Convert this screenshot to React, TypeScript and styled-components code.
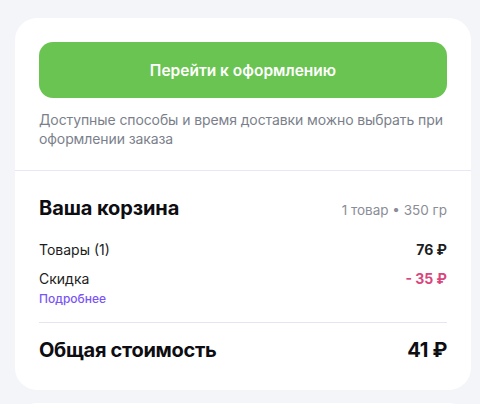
import styled, { createGlobalStyle } from 'styled-components';

const GlobalStyle = createGlobalStyle`
  html, body {
    margin: 0;
    padding: 0;
    background: #f4f5f9;
    font-family: Inter, 'Noto Sans', sans-serif;
    -webkit-font-smoothing: antialiased;
  }
`;

// styled components
const Page = styled.div`
  display: flex;
  flex-direction: column;
  gap: 13px;
  padding: 18px 9px 0 15px;
  height: 404px;
  box-sizing: border-box;
  overflow: hidden;
`;

const Card = styled.div`
  flex-shrink: 0;
  background: #fff;
  border-radius: 22px;
`;

const TopBlock = styled.div`
  padding: 24px 24px 22px;
  border-bottom: 1px solid #e9e7f6;
`;

const CheckoutBtn = styled.button`
  display: block;
  width: 100%;
  height: 56px;
  border: none;
  border-radius: 14px;
  background: #6ac451;
  color: #fff;
  font-family: inherit;
  font-size: 15.5px;
  font-weight: 600;
  cursor: pointer;
`;

const Note = styled.p`
  margin: 12px 0 0;
  font-size: 14px;
  line-height: 19px;
  color: #7b7f8b;
  letter-spacing: -0.1px;
`;

const Summary = styled.div`
  padding: 25px 24px 28px;
`;

const Row = styled.div<{ $mt?: number }>`
  display: flex;
  justify-content: space-between;
  align-items: baseline;
  margin-top: ${(p) => p.$mt ?? 0}px;
`;

const Title = styled.h2`
  margin: 0;
  font-size: 20px;
  font-weight: 700;
  color: #0d0d12;
  letter-spacing: -0.1px;
`;

const Meta = styled.span`
  font-size: 13.5px;
  color: #8a8d96;
`;

const Label = styled.span`
  font-size: 14px;
  color: #1c1d22;
`;

const Price = styled.span<{ $accent?: boolean }>`
  font-size: 14px;
  font-weight: 700;
  color: ${(p) => (p.$accent ? '#d9457c' : '#1c1d22')};
`;

const More = styled.a`
  display: block;
  margin-top: 4px;
  font-size: 12px;
  font-weight: 500;
  color: #7a55f5;
  text-decoration: none;
`;

const Divider = styled.div`
  height: 1px;
  background: #e6e4f3;
  margin-top: 16px;
`;

const Total = styled.span`
  font-size: 20px;
  font-weight: 700;
  color: #0d0d12;
  letter-spacing: -0.3px;
`;

const App = () => {
  return (
    <>
      <GlobalStyle />
      <Page>
        <Card>
          <TopBlock>
            <CheckoutBtn>Перейти к оформлению</CheckoutBtn>
            <Note>Доступные способы и время доставки можно выбрать при оформлении заказа</Note>
          </TopBlock>
          <Summary>
            <Row>
              <Title>Ваша корзина</Title>
              <Meta>1 товар • 350 гр</Meta>
            </Row>
            <Row $mt={21}>
              <Label>Товары (1)</Label>
              <Price>76 ₽</Price>
            </Row>
            <Row $mt={12}>
              <Label>Скидка</Label>
              <Price $accent>- 35 ₽</Price>
            </Row>
            <More href="#">Подробнее</More>
            <Divider />
            <Row $mt={15}>
              <Total>Общая стоимость</Total>
              <Total>41 ₽</Total>
            </Row>
          </Summary>
        </Card>
        <Card style={{ height: 60 }} />
      </Page>
    </>
  );
};

export default App;
